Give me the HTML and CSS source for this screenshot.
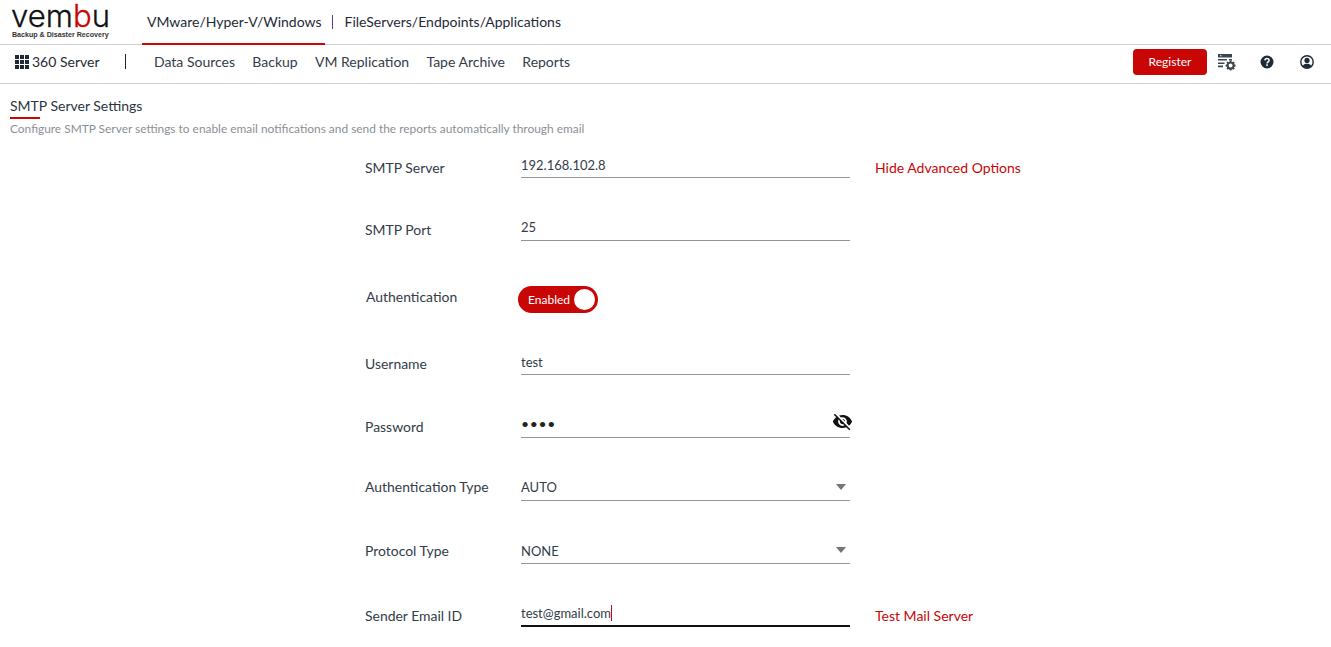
FILE: index.html
```html
<!DOCTYPE html>
<html lang="en">
<head>
<meta charset="utf-8">
<title>SMTP Server Settings</title>
<link rel="stylesheet" href="styles.css">
</head>
<body>
<header class="topbar">
  <div class="logo">
    <svg class="logo-mark" width="100" height="30" viewBox="0 0 100 30">
      <text class="logo-text" x="-1" y="25" textLength="99" lengthAdjust="spacingAndGlyphs">vem<tspan class="logo-b">b</tspan>u</text>
    </svg>
    <div class="logo-sub">Backup &amp; Disaster Recovery</div>
  </div>
  <nav class="product-tabs">
    <a class="product-tab active">VMware/Hyper-V/Windows</a>
    <span class="tab-sep"></span>
    <a class="product-tab">FileServers/Endpoints/Applications</a>
  </nav>
</header>
<div class="menubar">
  <div class="brand">
    <svg class="grid-icon" width="14" height="14" viewBox="0 0 14 14">
      <path d="M0 0h4v4H0zM5 0h4v4H5zM10 0h4v4h-4zM0 5h4v4H0zM5 5h4v4H5zM10 5h4v4h-4zM0 10h4v4H0zM5 10h4v4H5zM10 10h4v4h-4z" fill="#1f2a36"/>
    </svg>
    <span>360 Server</span>
  </div>
  <span class="menu-sep"></span>
  <nav class="menu">
    <a>Data Sources</a>
    <a>Backup</a>
    <a>VM Replication</a>
    <a>Tape Archive</a>
    <a>Reports</a>
  </nav>
  <div class="actions">
    <button class="register">Register</button>
    <svg class="act-settings" width="20" height="18" viewBox="0 0 20 18">
      <path d="M1 1h14v3.400H1zM1 6h9v1.600H1zM12 6h3v1.600h-3zM1 9.400h6.500V11H1zM1 12.600h5v1.600H1z" fill="#3c4650"/>
      <path d="M3 2.200h1.400v1H3z" fill="#fff"/>
      <circle cx="13.600" cy="12.600" r="3.100" fill="none" stroke="#3c4650" stroke-width="2.200"/>
      <path d="M13.600 7.600v2M13.600 15.600v2M8.600 12.600h2M16.600 12.600h2M10 9l1.400 1.400M15.800 14.800l1.400 1.400M17.200 9l-1.400 1.400M11.400 14.800L10 16.200" stroke="#3c4650" stroke-width="1.700"/>
    </svg>
    <svg class="act-help" width="14" height="14" viewBox="0 0 14 14">
      <circle cx="7" cy="7" r="6.500" fill="#1f2a36"/>
      <path d="M4.900 5.400C5 4.100 5.900 3.500 7 3.500c1.200 0 2.100.7 2.100 1.800 0 1.600-2 1.600-2 3.100" fill="none" stroke="#fff" stroke-width="1.500"/>
      <rect x="6.200" y="9.300" width="1.700" height="1.600" fill="#fff"/>
    </svg>
    <svg class="act-user" width="14" height="14" viewBox="0 0 14 14">
      <circle cx="7" cy="7" r="6.200" fill="none" stroke="#1f2a36" stroke-width="1.400"/>
      <circle cx="7" cy="5.400" r="2.600" fill="#1f2a36"/>
      <path d="M2.600 11.200C3.400 9.400 5 8.800 7 8.800s3.600.6 4.400 2.400C10.300 12.400 8.800 13 7 13s-3.300-.6-4.400-1.800z" fill="#1f2a36"/>
    </svg>
  </div>
</div>
<main class="content">
  <h1 class="title">SMTP Server Settings</h1>
  <p class="subtitle">Configure SMTP Server settings to enable email notifications and send the reports automatically through email</p>
  <form class="form">
    <div class="row row-first">
      <label class="label">SMTP Server</label>
      <div class="field">192.168.102.8</div>
      <a class="link">Hide Advanced Options</a>
    </div>
    <div class="row">
      <label class="label lift-1">SMTP Port</label>
      <div class="field field-port">25</div>
    </div>
    <div class="row">
      <label class="label label-auth">Authentication</label>
      <div class="toggle"><span class="toggle-text">Enabled</span><span class="knob"></span></div>
    </div>
    <div class="row row-after-toggle">
      <label class="label lift-1">Username</label>
      <div class="field">test</div>
    </div>
    <div class="row">
      <label class="label lift-1">Password</label>
      <div class="field field-pass">
        <span class="dots">••••</span>
        <svg class="eye" width="21" height="21" viewBox="0 0 24 24">
          <path fill="#111" d="M12 7c2.760 0 5 2.240 5 5 0 .65-.13 1.260-.36 1.830l2.920 2.920c1.510-1.260 2.700-2.890 3.430-4.750-1.730-4.390-6-7.500-11-7.500-1.400 0-2.740.25-3.980.7l2.160 2.160C10.740 7.130 11.350 7 12 7zM2 4.270l2.280 2.280.46.46C3.080 8.300 1.780 10.020 1 12c1.730 4.390 6 7.500 11 7.500 1.550 0 3.030-.3 4.380-.84l.42.42L19.730 22 21 20.730 3.270 3 2 4.270zM7.530 9.800l1.550 1.550c-.05.21-.08.43-.08.65 0 1.660 1.340 3 3 3 .22 0 .44-.03.65-.08l1.550 1.550c-.67.33-1.410.53-2.200.53-2.760 0-5-2.240-5-5 0-.79.2-1.530.53-2.200zm4.310-.78l3.150 3.150.02-.16c0-1.660-1.340-3-3-3l-.17.010z"/>
        </svg>
      </div>
    </div>
    <div class="row">
      <label class="label lift-4">Authentication Type</label>
      <div class="field field-select"><span>AUTO</span><i class="caret"></i></div>
    </div>
    <div class="row">
      <label class="label lift-3">Protocol Type</label>
      <div class="field field-select field-select-low"><span>NONE</span><i class="caret"></i></div>
    </div>
    <div class="row">
      <label class="label lift-1">Sender Email ID</label>
      <div class="field field-focus"><span>test@gmail.com</span><i class="cursor"></i></div>
      <a class="link lift-1">Test Mail Server</a>
    </div>
  </form>
</main>
</body>
</html>
```
FILE: styles.css
```css
* { box-sizing: border-box; }
html, body { margin: 0; height: 100%; overflow: hidden; }
body { font-family: Lato, "Open Sans", sans-serif; font-size: 14px; color: #2b3440; background: #fff; }
a { cursor: pointer; }

.topbar { height: 45px; border-bottom: 1px solid #cfcfcf; display: flex; align-items: stretch; }
.logo { width: 142px; padding: 2px 0 0 12px; }
.logo-mark { display: block; overflow: visible; }
.logo-text { font-family: Inter, Lato, sans-serif; font-weight: 300; font-size: 31px; fill: #111; stroke: #111; stroke-width: .3px; }
.logo-b { fill: #c90606; stroke: #c90606; }
.logo-sub { font-family: "Liberation Sans", Arial, sans-serif; font-size: 7.100px; font-weight: 700; color: #333; margin-top: -1px; white-space: nowrap; line-height: 9px; }
.product-tabs { display: flex; align-items: stretch; }
.product-tab { font-size: 14px; line-height: 44px; color: #1f2a36; padding: 0 5px; white-space: nowrap; height: 45px; }
.product-tab.active { border-bottom: 2px solid #c90606; padding-right: 3px; }
.tab-sep { width: 1px; height: 14px; background: #5b3a9a; margin: 15px 7px 0 7px; }

.menubar { height: 39px; border-bottom: 1px solid #cfcfcf; display: flex; align-items: center; padding: 0 0 5px 15px; }
.brand { display: flex; align-items: center; gap: 3px; font-size: 14px; color: #1f2a36; width: 110px; }
.grid-icon { flex: none; }
.menu-sep { width: 1px; height: 15px; background: #222; margin-top: -1px; }
.menu { display: flex; gap: 17.300px; margin-left: 28px; font-size: 14px; color: #333c48; }
.actions { margin-left: auto; display: flex; align-items: center; margin-right: 17px; }
.register { width: 74px; height: 26px; border: 0; border-radius: 4px; background: #c90606; color: #fff; font: 12px Lato, sans-serif; padding: 0; }
.act-settings { margin-left: 10px; }
.act-help { margin-left: 23px; }
.act-user { margin-left: 26px; }

.content { padding: 13px 0 0 10px; }
.title { margin: 0; font-size: 14px; font-weight: 400; line-height: 18px; color: #2b3440; padding-bottom: 3px; }
.title::after { content: ""; display: block; width: 30px; height: 2px; background: #c90606; margin-top: 2px; }
.subtitle { margin: 0; font-size: 11.920px; line-height: 14px; color: #8a8f96; }

.form { margin-left: 355px; width: 700px; margin-top: -6px; }
.row { display: grid; grid-template-columns: 156px 329px auto; align-items: end; height: 63px; }
.row-first { height: 48px; }
.row-after-toggle { height: 71px; }
.label { line-height: 20px; font-size: 13.950px; color: #333c48; }
.lift-1 { padding-bottom: 1px; }
.lift-3 { padding-bottom: 3px; }
.lift-4 { padding-bottom: 4px; }
.label-auth { padding: 0 0 0 1px; margin-bottom: -3px; }
.field { height: 28px; padding-top: 5px; border-bottom: 1px solid #949494; line-height: 20px; font-size: 13px; color: #333c48; position: relative; display: flex; align-items: flex-start; }
.field-port { padding-top: 4px; }
.field-select { align-items: flex-end; padding: 0 0 3px; justify-content: space-between; }
.field-select-low { padding-bottom: 2px; }
.caret { width: 0; height: 0; border: 5px solid transparent; border-top: 6px solid #757575; border-bottom: 0; margin: 0 4px 7px 0; }
.field-select-low .caret { margin-bottom: 8px; }
.field-pass { padding-top: 0; }
.dots { font-size: 14px; letter-spacing: .6px; line-height: 20px; margin-top: 4px; color: #222; }
.eye { position: absolute; right: -3px; top: 1px; }
.field-focus { border-bottom: 2px solid #111; padding-top: 4px; }
.cursor { width: 1px; height: 16px; background: #c90606; margin-top: 2px; }
.link { color: #c90606; line-height: 20px; font-size: 14px; padding-left: 25px; white-space: nowrap; }
.toggle { width: 80px; height: 27px; border-radius: 14px; background: #c90606; color: #fff; display: flex; align-items: center; justify-content: space-between; padding: 0 3px 0 10px; margin-left: -3px; margin-bottom: -9px; font-size: 12px; }
.toggle-text { line-height: 27px; }
.knob { width: 21px; height: 21px; border-radius: 50%; background: #fff; }
```
